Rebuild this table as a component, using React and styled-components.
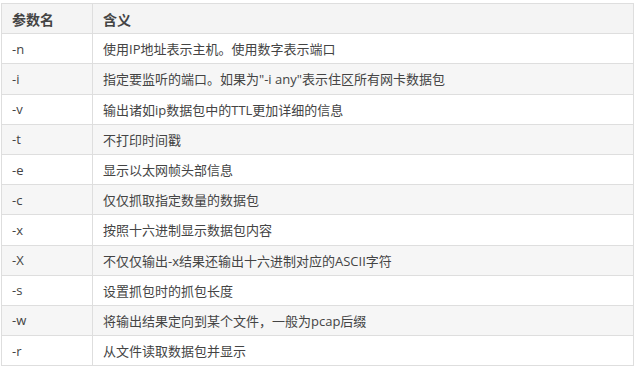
import React from 'react';
import styled, { createGlobalStyle } from 'styled-components';

const GlobalStyle = createGlobalStyle`
  html, body {
    margin: 0;
    padding: 0;
    background: #fff;
  }
  body {
    font-family: "Open Sans", "Noto Sans CJK SC", sans-serif;
    color: #333;
  }
`;

const Wrapper = styled.div`
  padding: 3px 6px 0 1px;
`;

const Table = styled.table`
  width: 633px;
  border-collapse: collapse;
  font-size: 13px;
  table-layout: fixed;
`;

const Row = styled.tr`
  height: 30.2px;
  background: ${props => (props.striped ? '#f6f6f6' : '#fff')};
`;

const HeadCell = styled.th`
  box-sizing: border-box;
  border: 1px solid #dedede;
  padding: 0 10px;
  text-align: left;
  font-weight: 700;
  font-size: 14px;
  color: #444;
  background: #f4f4f4;
  width: ${props => props.width || 'auto'};
`;

const Cell = styled.td`
  border: 1px solid #dedede;
  padding: 0 10px;
  color: #444;
  white-space: nowrap;
`;

const rows = [
  ['-n', '使用IP地址表示主机。使用数字表示端口'],
  ['-i', '指定要监听的端口。如果为"-i any"表示住区所有网卡数据包'],
  ['-v', '输出诸如ip数据包中的TTL更加详细的信息'],
  ['-t', '不打印时间戳'],
  ['-e', '显示以太网帧头部信息'],
  ['-c', '仅仅抓取指定数量的数据包'],
  ['-x', '按照十六进制显示数据包内容'],
  ['-X', '不仅仅输出-x结果还输出十六进制对应的ASCII字符'],
  ['-s', '设置抓包时的抓包长度'],
  ['-w', '将输出结果定向到某个文件，一般为pcap后缀'],
  ['-r', '从文件读取数据包并显示'],
];

const App = () => {
  return (
    <Wrapper>
      <GlobalStyle />
      <Table>
        <thead>
          <Row>
            <HeadCell width={'91px'}>参数名</HeadCell>
            <HeadCell>含义</HeadCell>
          </Row>
        </thead>
        <tbody>
          {rows.map(([flag, desc], i) => (
            <Row key={flag} striped={i % 2 === 1}>
              <Cell>{flag}</Cell>
              <Cell>{desc}</Cell>
            </Row>
          ))}
        </tbody>
      </Table>
    </Wrapper>
  );
};

export default App;
